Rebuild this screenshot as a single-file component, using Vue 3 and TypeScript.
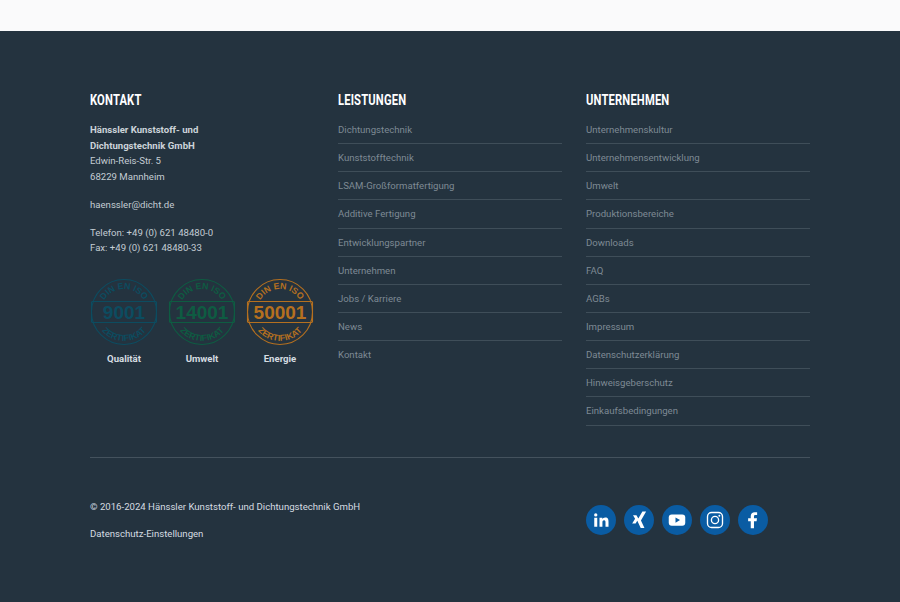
<script setup lang="ts">
const services = ['Dichtungstechnik', 'Kunststofftechnik', 'LSAM-Großformatfertigung', 'Additive Fertigung', 'Entwicklungspartner', 'Unternehmen', 'Jobs / Karriere', 'News', 'Kontakt']
const company = ['Unternehmenskultur', 'Unternehmensentwicklung', 'Umwelt', 'Produktionsbereiche', 'Downloads', 'FAQ', 'AGBs', 'Impressum', 'Datenschutzerklärung', 'Hinweisgeberschutz', 'Einkaufsbedingungen']
const seals = [
  { num: '9001', label: 'Qualität', color: '#0c4c60' },
  { num: '14001', label: 'Umwelt', color: '#0e5c42' },
  { num: '50001', label: 'Energie', color: '#b5701f' },
]
</script>

<template>
  <div class="page">
    <div class="topbar"></div>
    <footer class="footer">
      <div class="columns">
        <section class="col">
          <h4>KONTAKT</h4>
          <p class="address"><strong>Hänssler Kunststoff- und<br>Dichtungstechnik GmbH</strong><br>Edwin-Reis-Str. 5<br>68229 Mannheim</p>
          <p class="address">haenssler@dicht.de</p>
          <p class="address">Telefon: +49 (0) 621 48480-0<br>Fax: +49 (0) 621 48480-33</p>
          <div class="seals">
            <figure v-for="(s, i) in seals" :key="s.num" class="seal">
              <svg width="68" height="68" viewBox="0 0 68 68" :style="{ color: s.color }">
                <defs>
                  <path :id="'top' + i" d="M11 34a23 23 0 0 1 46 0" />
                  <path :id="'bot' + i" d="M5 34a29 29 0 0 0 58 0" />
                </defs>
                <circle cx="34" cy="34" r="32.500" fill="none" stroke="currentColor" stroke-width="1.100" />
                <path d="M2 23.500h64M2 44.500h64M1.500 23.500v21M66.500 23.500v21" fill="none" stroke="currentColor" stroke-width="1.100" />
                <text x="34" y="40.800" class="seal-num" text-anchor="middle" fill="currentColor">{{ s.num }}</text>
                <text class="seal-small" fill="currentColor" text-anchor="middle"><textPath :href="'#top' + i" startOffset="50%">DIN EN ISO</textPath></text>
                <text class="seal-small" fill="currentColor" text-anchor="middle"><textPath :href="'#bot' + i" startOffset="50%">ZERTIFIKAT</textPath></text>
              </svg>
              <figcaption>{{ s.label }}</figcaption>
            </figure>
          </div>
        </section>
        <section class="col">
          <h4>LEISTUNGEN</h4>
          <ul>
            <li v-for="item in services" :key="item">{{ item }}</li>
          </ul>
        </section>
        <section class="col">
          <h4>UNTERNEHMEN</h4>
          <ul>
            <li v-for="item in company" :key="item">{{ item }}</li>
          </ul>
        </section>
      </div>
      <div class="bottom">
        <div class="legal">
          <p>© 2016-2024 Hänssler Kunststoff- und Dichtungstechnik GmbH</p>
          <p>Datenschutz-Einstellungen</p>
        </div>
        <div class="social">
          <a class="circle">
            <svg width="18" height="18" viewBox="0 0 24 24" fill="#fff"><path d="M3 9h4v12H3zM5 3a2.200 2.200 0 1 1 0 4.400A2.200 2.200 0 0 1 5 3zM10 9h3.800v1.700c.6-1 1.900-2 3.800-2 4 0 4.400 2.600 4.400 6V21h-4v-5.500c0-1.400 0-3.200-1.900-3.200s-2.200 1.500-2.200 3.100V21h-3.900z" /></svg>
          </a>
          <a class="circle">
            <svg width="18" height="18" viewBox="0 0 24 24" fill="#fff"><path d="M16.500 0.500h5L14.600 12.500l4.700 10h-5L9.600 12.500zM4 5.500h4.600l2.700 4.700-3.800 6.300H2.900l3.900-6.200z" /></svg>
          </a>
          <a class="circle">
            <svg width="18" height="18" viewBox="0 0 24 24"><rect x="1" y="4.500" width="22" height="15" rx="4" fill="#fff" /><path d="M10 8.500v7l6-3.500z" fill="#0a5ca3" /></svg>
          </a>
          <a class="circle">
            <svg width="18" height="18" viewBox="0 0 24 24" fill="none" stroke="#fff" stroke-width="1.800"><rect x="2" y="2" width="20" height="20" rx="5.500" /><circle cx="12" cy="12" r="4.800" /><circle cx="17.800" cy="6.200" r="1.300" fill="#fff" stroke="none" /></svg>
          </a>
          <a class="circle">
            <svg width="18" height="18" viewBox="0 0 24 24" fill="#fff"><path d="M9 23v-9.500H5.500V9.500H9V7c0-3.600 2.100-5.500 5.300-5.500 1.500 0 2.700.1 3.200.2v3.600h-2.200c-1.700 0-2 .8-2 2v2.200h4l-.5 4h-3.500V23z" /></svg>
          </a>
        </div>
      </div>
    </footer>
  </div>
</template>

<style scoped>
.page {
  width: 900px;
  height: 602px;
  display: flex;
  flex-direction: column;
  overflow: hidden;
  background: #fafafb;
  font-family: Roboto, "Liberation Sans", sans-serif;
}
.topbar {
  height: 31px;
  flex: none;
}
.footer {
  flex: 1;
  background: #24333f;
  padding: 61px 90px 0;
  color: #c3ccd3;
}
.columns {
  display: grid;
  grid-template-columns: repeat(3, 224px);
  column-gap: 24px;
  height: 365px;
  border-bottom: 1px solid #44525d;
}
h4 {
  margin: 0 0 8px;
  font-size: 14px;
  line-height: 16px;
  font-weight: 700;
  color: #fff;
  transform: scaleX(0.8);
  transform-origin: left center;
  letter-spacing: 0.2px;
}
.address {
  margin: 0 0 12px;
  font-size: 9.600px;
  line-height: 15.700px;
}
.address:first-of-type {
  margin-top: 14px;
}
.address strong {
  font-weight: 700;
  color: #ccd4da;
}
.seals {
  display: flex;
  margin-top: 22px;
  gap: 10px;
}
.seal {
  margin: 0;
  width: 68px;
  display: flex;
  flex-direction: column;
  align-items: center;
}
.seal svg {
  display: block;
}
figcaption {
  margin-top: 6px;
  font-size: 9.600px;
  line-height: 14px;
  font-weight: 700;
  color: #d5dce1;
}
.seal-num {
  font-family: "Liberation Sans", sans-serif;
  font-weight: 700;
  font-size: 19px;
}
.seal-small {
  font-family: "Liberation Sans", sans-serif;
  font-weight: 700;
  font-size: 8.800px;
}
ul {
  list-style: none;
  margin: 0;
  padding: 0;
}
li {
  height: 28.150px;
  line-height: 28px;
  font-size: 9.600px;
  color: #7e8a94;
  border-bottom: 1px solid #3f4e59;
  box-sizing: border-box;
}
section:nth-child(2) li:last-child {
  border-bottom: none;
}
.bottom {
  display: grid;
  grid-template-columns: 472px 224px;
  column-gap: 24px;
  padding-top: 41px;
}
.legal p {
  margin: 0 0 11px;
  font-size: 9.600px;
  line-height: 16px;
  color: #d5dce1;
}
.social {
  display: flex;
  gap: 8px;
  margin-top: 6px;
}
.circle {
  width: 30px;
  height: 30px;
  border-radius: 50%;
  background: #0a5ca3;
  display: flex;
  align-items: center;
  justify-content: center;
}
</style>
